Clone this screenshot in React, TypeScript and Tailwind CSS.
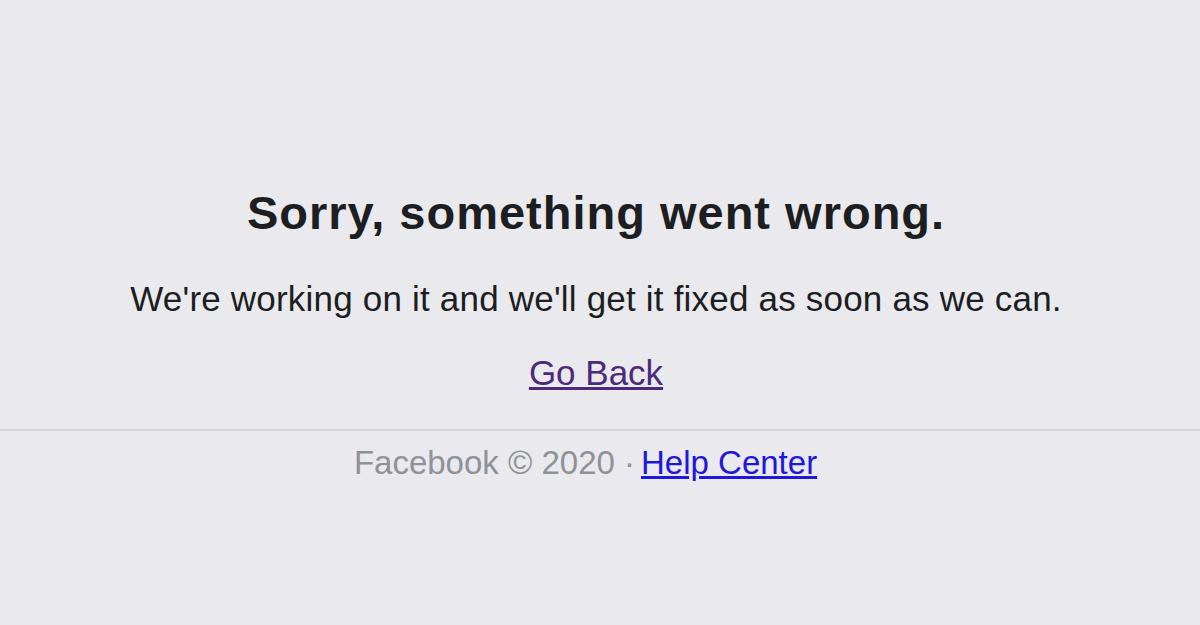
export default function App() {
  return (
    <div
      className="w-[1200px] h-[625px] bg-[#e9e9ee] overflow-hidden flex flex-col"
      style={{ fontFamily: '"Liberation Sans", Arial, sans-serif' }}
    >
      <div className="flex flex-col items-center pt-[185px] pr-[8px]">
        <h1 className="text-[47px] leading-[56px] font-bold tracking-[1px] text-[#1c1e21]">
          Sorry, something went wrong.
        </h1>
        <p className="mt-[36px] text-[35px] leading-[44px] tracking-[0.2px] text-[#1c1e21]">
          We're working on it and we'll get it fixed as soon as we can.
        </p>
        <a href="#" className="mt-[30px] text-[35px] leading-[44px] text-[#4b2a7a] underline">
          Go Back
        </a>
      </div>
      <div className="mt-[34px] border-t-2 border-[#d6d6db]" />
      <div className="flex justify-center pt-[12px] pr-[29px] text-[33px] leading-[40px]">
        <span className="text-[#909297]">Facebook © 2020 · </span>
        <a href="#" className="ml-[6px] text-[#1f17e0] underline">Help Center</a>
      </div>
    </div>
  );
}
